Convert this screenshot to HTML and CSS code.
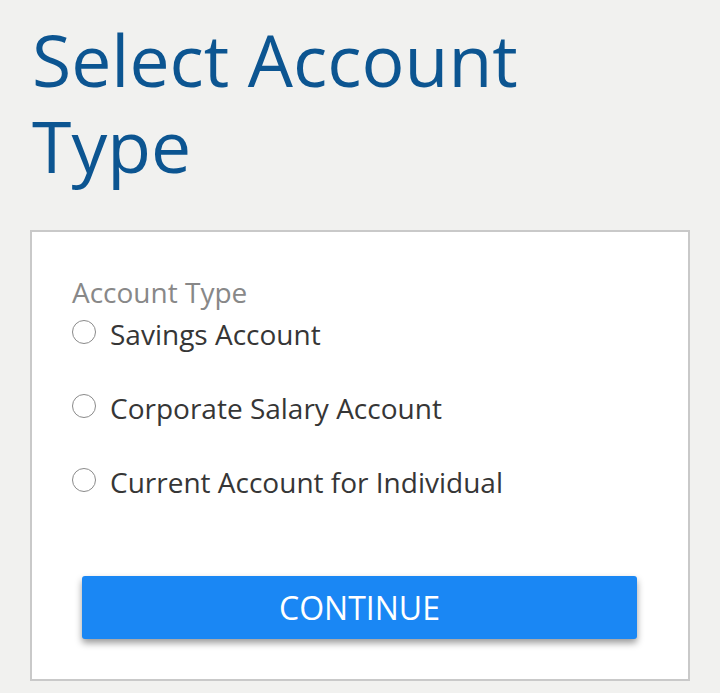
FILE: index.html
```html
<!DOCTYPE html>
<html lang="en">
<head>
<meta charset="utf-8">
<title>Select Account Type</title>
<link rel="stylesheet" href="styles.css">
</head>
<body>
<main class="page">
  <h1 class="title">Select Account Type</h1>
  <form class="card">
    <div class="group" role="radiogroup" aria-labelledby="grp">
      <div class="group-label" id="grp">Account Type</div>
      <label class="option"><input type="radio" name="type" class="radio"><span>Savings Account</span></label>
      <label class="option"><input type="radio" name="type" class="radio"><span>Corporate Salary Account</span></label>
      <label class="option"><input type="radio" name="type" class="radio"><span>Current Account for Individual</span></label>
    </div>
    <button type="button" class="btn">CONTINUE</button>
  </form>
</main>
</body>
</html>
```
FILE: styles.css
```css
html, body {
  margin: 0;
  padding: 0;
  background: #f1f1ef;
}
body {
  font-family: "Open Sans", "Noto Sans", sans-serif;
}
.page {
  padding: 17px 30px 0 30px;
}
.title {
  margin: 0 0 0 2px;
  font-size: 71.5px;
  line-height: 86px;
  font-weight: 400;
  color: #0c5591;
  width: 540px;
}
.card {
  margin-top: 41px;
  background: #fff;
  border: 2px solid #c9c9c9;
  height: 451px;
  box-sizing: border-box;
  padding: 43px 50px 0 40px;
}
.group {
  display: flex;
  flex-direction: column;
  gap: 24px;
}
.group-label {
  font-size: 28px;
  line-height: 34px;
  color: #888;
  margin-bottom: -24px;
}
.option {
  display: flex;
  align-items: center;
  gap: 14px;
  height: 50px;
  font-size: 28px;
  color: #363636;
}
.radio {
  appearance: none;
  margin: -4px 0 0 0;
  width: 24px;
  height: 24px;
  border: 1.5px solid #8a8a8a;
  border-radius: 50%;
  box-sizing: border-box;
  background: #fff;
  flex: none;
}
.btn {
  display: block;
  margin: 69px 0 0 10px;
  width: 555px;
  height: 63px;
  border: 0;
  border-radius: 3px;
  background: #1a87f4;
  color: #fff;
  font-family: "Open Sans", "Noto Sans", sans-serif;
  font-size: 32px;
  box-shadow: 0 4px 7px rgba(0, 0, 0, 0.4);
}
```
